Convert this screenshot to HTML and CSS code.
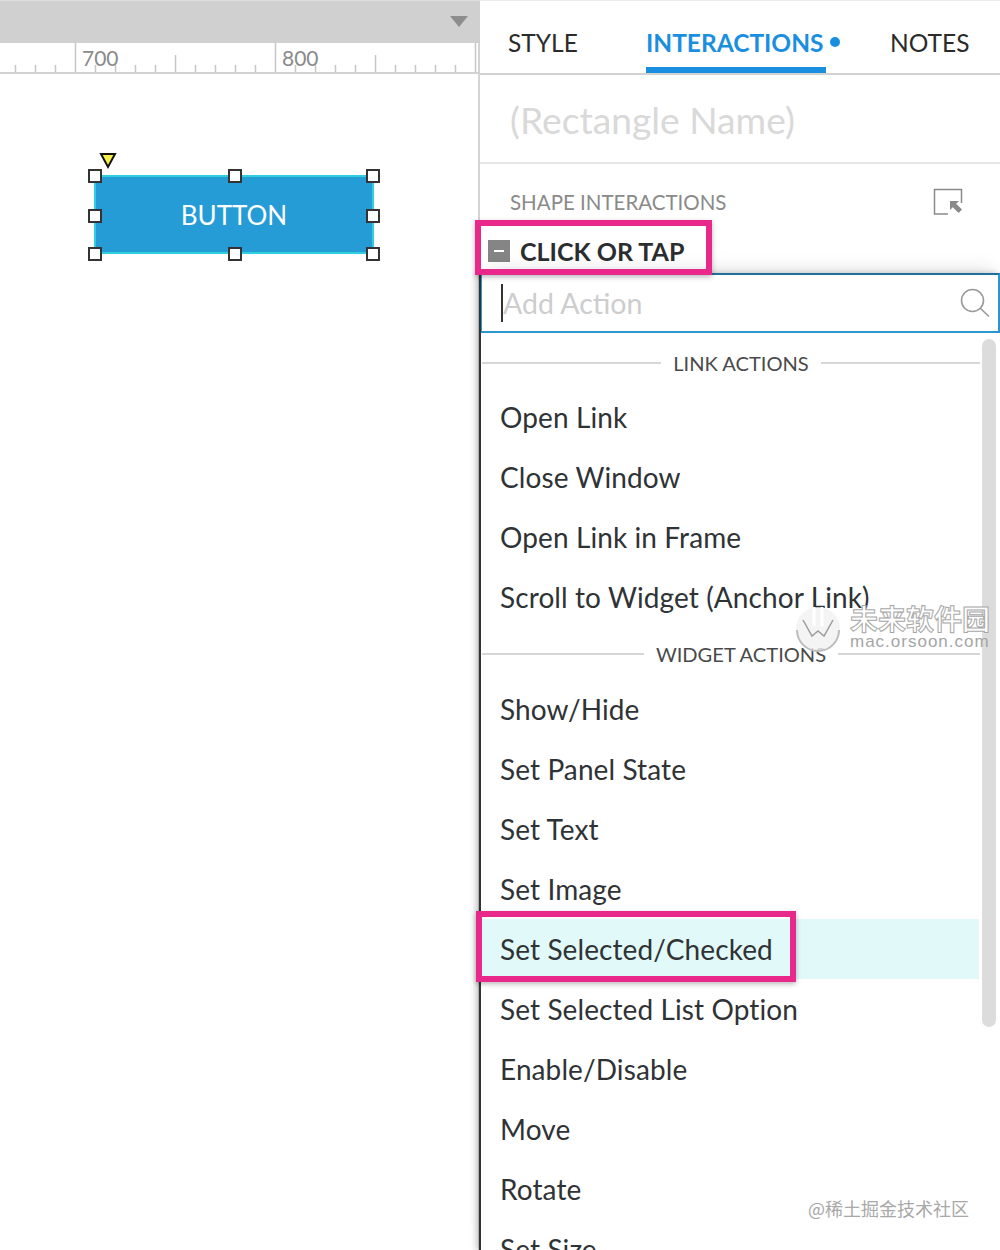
FILE: index.html
```html
<!DOCTYPE html>
<html lang="en">
<head>
<meta charset="utf-8">
<title>Interactions</title>
<link rel="stylesheet" href="styles.css">
</head>
<body>
<div class="app">
  <section class="canvas-col">
    <div class="toolbar"><span class="caret-down"></span></div>
    <div class="ruler">
      <svg class="ruler-ticks" width="480" height="29" viewBox="0 0 480 29">
        <path d="M15.5 22V29M35.5 22V29M55.5 22V29M75.5 0V29M95.5 22V29M115.5 22V29M135.5 22V29M155.5 22V29M175.5 12V29M195.5 22V29M215.5 22V29M235.5 22V29M255.5 22V29M275.5 0V29M295.5 22V29M315.5 22V29M335.5 22V29M355.5 22V29M375.5 12V29M395.5 22V29M415.5 22V29M435.5 22V29M455.5 22V29M475.5 0V29" stroke="#c6c6c6" stroke-width="1.5" fill="none"/>
      </svg>
      <span class="ruler-num n700">700</span>
      <span class="ruler-num n800">800</span>
    </div>
    <div class="stage">
      <svg class="marker" width="18" height="18" viewBox="0 0 18 18"><path d="M2 2H16L9 15Z" fill="#f5f04a" stroke="#111" stroke-width="2"/></svg>
      <div class="widget">BUTTON</div>
      <span class="handle h1"></span><span class="handle h2"></span><span class="handle h3"></span>
      <span class="handle h4"></span><span class="handle h5"></span>
      <span class="handle h6"></span><span class="handle h7"></span><span class="handle h8"></span>
    </div>
  </section>

  <aside class="panel">
    <nav class="tabs">
      <span class="tab tab-style">STYLE</span>
      <span class="tab tab-active">INTERACTIONS<i class="dot"></i></span>
      <span class="tab tab-notes">NOTES</span>
    </nav>
    <div class="name-row">(Rectangle Name)</div>
    <div class="section-head">
      <span class="section-title">SHAPE INTERACTIONS</span>
      <svg class="org-icon" width="30" height="28" viewBox="0 0 30 28">
        <path d="M15 26H1.5V1.5H28.5V15" fill="none" stroke="#8a8a8a" stroke-width="1.5"/>
        <path d="M17 13H26L23.2 15.8L29 21.6L25.6 25L19.8 19.2L17 22Z" fill="#8a8a8a"/>
      </svg>
    </div>
    <div class="event-row">
      <span class="minus"><i></i></span>
      <span class="event-label">CLICK OR TAP</span>
    </div>
    <div class="dropdown">
      <div class="search">
        <span class="text-caret"></span>
        <span class="placeholder">Add Action</span>
        <svg class="search-icon" width="30" height="30" viewBox="0 0 30 30">
          <circle cx="12.5" cy="12.5" r="11" fill="none" stroke="#9a9a9a" stroke-width="1.6"/>
          <path d="M20.5 20.5L29 28.5" stroke="#9a9a9a" stroke-width="1.6" fill="none"/>
        </svg>
      </div>
      <div class="list">
        <div class="group"><span>LINK ACTIONS</span></div>
        <div class="item">Open Link</div>
        <div class="item">Close Window</div>
        <div class="item">Open Link in Frame</div>
        <div class="item">Scroll to Widget (Anchor Link)</div>
        <div class="group group-widget"><span>WIDGET ACTIONS</span></div>
        <div class="item">Show/Hide</div>
        <div class="item">Set Panel State</div>
        <div class="item">Set Text</div>
        <div class="item">Set Image</div>
        <div class="item item-hover">Set Selected/Checked</div>
        <div class="item">Set Selected List Option</div>
        <div class="item">Enable/Disable</div>
        <div class="item">Move</div>
        <div class="item">Rotate</div>
        <div class="item">Set Size</div>
        <span class="scrollbar"></span>
      </div>
    </div>
  </aside>

  <span class="callout callout-event"></span>
  <span class="callout callout-item"></span>

  <div class="wm-orsoon">
    <svg class="wm-logo" width="46" height="46" viewBox="0 0 46 46">
      <circle cx="23" cy="23" r="22" fill="#f1f1f1" fill-opacity=".8"/>
      <path d="M2 24A21 21 0 0 0 44 24" fill="none" stroke="#bdbdbd" stroke-width="2"/>
      <path d="M8 14L17 30L23 25L29 30L38 14" fill="none" stroke="#9d9d9d" stroke-width="1.5"/>
      <path d="M19 1V20M27 1V20" stroke="#fff" stroke-width="3"/>
    </svg>
    <div class="wm-text">
      <span class="wm-cn">未来软件园</span>
      <span class="wm-url">mac.orsoon.com</span>
    </div>
  </div>
  <span class="wm-juejin">@稀土掘金技术社区</span>
</div>
</body>
</html>
```
FILE: styles.css
```css
* { box-sizing: border-box; }
html, body { margin: 0; padding: 0; background: #fff; }
body { width: 1000px; height: 1250px; overflow: hidden; font-family: "Lato", "Noto Sans", sans-serif; color: #2f3336; }

.app { position: relative; display: flex; width: 1000px; height: 1250px; overflow: hidden; }

/* canvas column */
.canvas-col { position: relative; z-index: 1; width: 480px; flex: none; display: flex; flex-direction: column; }
.toolbar { height: 43px; flex: none; background: #d0d0d0; border-top: 1px solid #dedede; display: flex; justify-content: flex-end; align-items: center; padding-right: 12px; }
.caret-down { width: 0; height: 0; border-left: 9px solid transparent; border-right: 9px solid transparent; border-top: 11px solid #8d8d8d; margin-top: -1px; }
.ruler { position: relative; height: 31px; flex: none; border-bottom: 2px solid #d2d2d2; }
.ruler-ticks { display: block; }
.ruler-num { position: absolute; top: 2px; font-size: 21px; line-height: 26px; color: #8a8a8a; }
.n700 { left: 82px; }
.n800 { left: 282px; }
.stage { position: relative; flex: 1; }
.marker { position: absolute; left: 99px; top: 78px; }
.widget { position: absolute; left: 94px; top: 101px; width: 280px; height: 79px; background: #259cd6; border: 2px solid #2fcfe0; color: #fff; font-size: 26px; display: flex; align-items: center; justify-content: center; }
.handle { position: absolute; width: 14px; height: 14px; background: #fff; border: 2px solid #333; }
.h1 { left: 88px; top: 95px; }
.h2 { left: 228px; top: 95px; }
.h3 { left: 366px; top: 95px; }
.h4 { left: 88px; top: 135px; }
.h5 { left: 366px; top: 135px; }
.h6 { left: 88px; top: 173px; }
.h7 { left: 228px; top: 173px; }
.h8 { left: 366px; top: 173px; }

/* panel */
.panel { width: 522px; flex: none; display: flex; flex-direction: column; border-left: 2px solid #d4d4d4; margin-left: -2px; background: #fff; }
.tabs { height: 75px; flex: none; display: flex; border-bottom: 2px solid #d2d2d2; border-top: 1px solid #ececec; }
.tab { font-size: 24.5px; line-height: 32px; padding-top: 26px; color: #2b2b2b; position: relative; }
.tab-style { margin-left: 28px; width: 138px; }
.tab-active { color: #1b8fdf; font-weight: 700; width: 180px; height: 72px; border-bottom: 6px solid #1b8fdf; }
.tab-notes { margin-left: 64px; }
.dot { position: absolute; left: 184px; top: 36px; width: 10px; height: 10px; border-radius: 50%; background: #1b8fdf; }
.name-row { height: 89px; flex: none; padding: 0 0 0 30px; font-size: 37.2px; line-height: 90px; color: #d9d9d9; border-bottom: 2px solid #e6e6e6; }
.section-head { height: 62px; flex: none; display: flex; align-items: center; justify-content: space-between; padding: 13px 37px 0 30px; }
.section-title { font-size: 20.5px; color: #8a8a8a; }
.event-row { height: 47px; flex: none; display: flex; align-items: center; gap: 10px; padding: 3px 0 0 8px; }
.minus { width: 22px; height: 22px; background: #858585; display: flex; align-items: center; justify-content: center; }
.minus i { display: block; width: 10px; height: 2px; background: #fff; }
.event-label { font-size: 25px; font-weight: 700; color: #2b2e30; }

/* dropdown */
.dropdown { flex: 1; min-height: 0; background: #fff; border-left: 2px solid #333; margin-left: -1px; box-shadow: -3px 0 6px rgba(0,0,0,.22), 0 -12px 18px -8px rgba(0,0,0,.10); position: relative; }
.search { height: 60px; border: 2px solid #2b95d0; border-left-width: 1px; border-top-color: #1f6f9f; display: flex; align-items: center; padding-left: 19px; position: relative; }
.text-caret { width: 2px; height: 38px; background: #333; flex: none; }
.placeholder { font-size: 28.5px; color: #cdcdcd; }
.search-icon { margin-left: auto; margin-right: 8px; }
.list { position: relative; }
.group { display: grid; grid-template-columns: 1fr auto 1fr; align-items: center; column-gap: 12px; height: 54px; padding: 5px 0 0 1px; font-size: 20.1px; color: #4a4a4a; }
.group::before, .group::after { content: ""; height: 2px; background: #d6d6d6; }
.group::before { order: 0; }
.group > span { order: 1; }
.group::after { order: 2; width: calc(100% - 20px); }
.group-widget { height: 52px; padding-top: 2px; }
.item { height: 60px; display: flex; align-items: center; padding-left: 19px; font-size: 28px; letter-spacing: .1px; color: #2f3336; }
.item-hover { background: #e1f9f8; width: 498px; }
.scrollbar { position: absolute; right: 4px; top: 6px; width: 14px; height: 688px; background: #dcdcdc; border-radius: 7px; }

/* overlays */
.callout { position: absolute; z-index: 2; border: 6px solid #e8288a; box-shadow: 0 2px 5px rgba(0,0,0,.28); }
.callout-event { left: 475px; top: 220px; width: 237px; height: 55px; }
.callout-item { left: 476px; top: 911px; width: 320px; height: 71px; }

.wm-orsoon { position: absolute; z-index: 2; left: 795px; top: 603px; display: flex; gap: 9px; }
.wm-logo { margin-top: 3px; }
.wm-text { display: flex; flex-direction: column; }
.wm-cn { font-family: "Noto Sans CJK SC", sans-serif; font-size: 28px; line-height: 31px; color: #fff; -webkit-text-stroke: 1px #a8a8a8; font-weight: 700; }
.wm-url { font-family: "Liberation Sans", sans-serif; font-size: 17px; line-height: 16px; letter-spacing: 1px; color: #a5a5a5; }
.wm-juejin { position: absolute; z-index: 2; left: 808px; top: 1196px; font-family: "Noto Sans CJK SC", sans-serif; font-size: 18px; line-height: 24px; color: #a8a8a8; }
```
